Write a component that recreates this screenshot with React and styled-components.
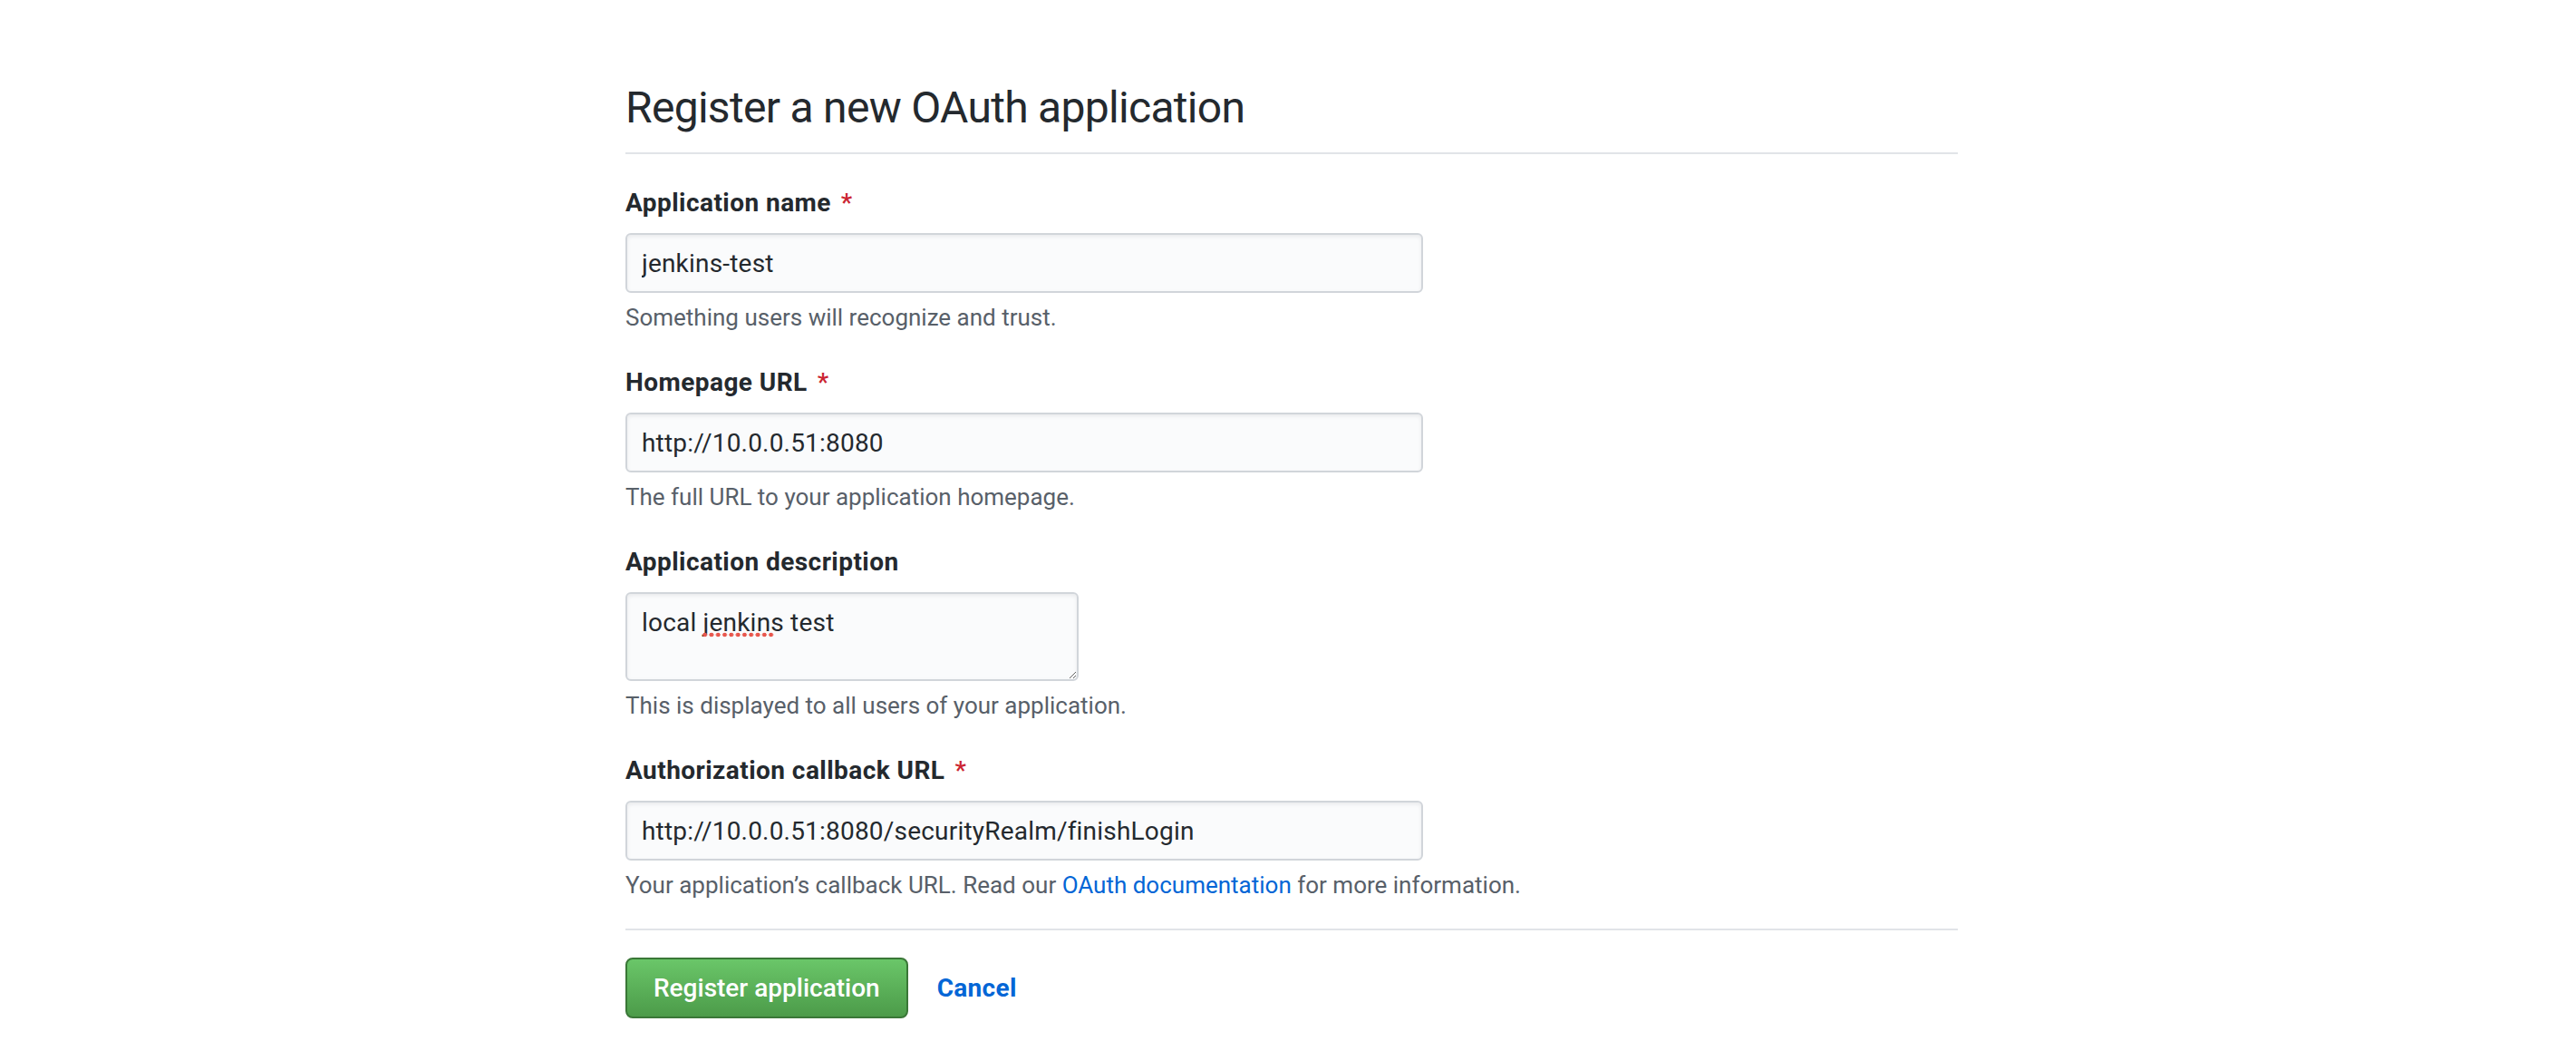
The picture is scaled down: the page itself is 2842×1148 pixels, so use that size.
import React from "react";
import styled, { createGlobalStyle } from "styled-components";

const GlobalStyle = createGlobalStyle`
  html, body {
    margin: 0;
    padding: 0;
    background: #ffffff;
  }
  body {
    font-family: Roboto, Inter, "Liberation Sans", sans-serif;
    color: #24292e;
  }
`;

const Page = styled.div`
  width: 1478px;
  margin: 0 auto;
  padding: 89px 0 0 8px;
  box-sizing: border-box;
`;

const Subhead = styled.div`
  padding-bottom: 19px;
  border-bottom: 2px solid #e1e4e8;
  margin-bottom: 34px;
`;

const Title = styled.h1`
  margin: 0;
  font-size: 48px;
  line-height: 60px;
  font-weight: 400;
  letter-spacing: -0.7px;
  color: #24292e;
`;

const FormGroup = styled.div`
  margin-bottom: 34px;
`;

const Label = styled.label`
  display: block;
  font-size: 28px;
  line-height: 40px;
  font-weight: 700;
  letter-spacing: 0.45px;
  color: #24292e;
  margin-bottom: 13px;
`;

const Required = styled.span`
  color: #cb2431;
  font-weight: 500;
  margin-left: 11px;
`;

const TextInput = styled.input`
  display: block;
  box-sizing: border-box;
  width: ${(p) => p.$width || 880}px;
  height: 66px;
  padding: 12px 16px;
  font-family: inherit;
  font-size: 28px;
  line-height: 40px;
  letter-spacing: 0.2px;
  color: #24292e;
  background: #fafbfc;
  border: 2px solid #d1d5da;
  border-radius: 6px;
  box-shadow: inset 0 2px 4px rgba(27, 31, 35, 0.075);
  outline: none;
`;

const AreaWrap = styled.div`
  position: relative;
  width: 500px;
`;

const TextArea = styled.textarea`
  display: block;
  box-sizing: border-box;
  width: 500px;
  height: 98px;
  padding: 12px 16px;
  font-family: inherit;
  font-size: 28px;
  line-height: 40px;
  letter-spacing: 0.2px;
  color: #24292e;
  background: #fafbfc;
  border: 2px solid #d1d5da;
  border-radius: 6px;
  box-shadow: inset 0 2px 4px rgba(27, 31, 35, 0.075);
  outline: none;
  resize: both;
`;

const SpellMark = styled.span`
  position: absolute;
  left: 84px;
  top: 44px;
  width: 80px;
  height: 6px;
  background-image: radial-gradient(circle, #e8574d 2.2px, transparent 2.6px);
  background-size: 7.3px 6px;
  pointer-events: none;
`;

const Note = styled.p`
  margin: 9px 0 0;
  font-size: 26px;
  line-height: 36px;
  color: #586069;
`;

const Link = styled.a`
  color: #0366d6;
  text-decoration: none;
`;

const Divider = styled.hr`
  border: 0;
  border-top: 2px solid #e1e4e8;
  margin: -4px 0 30px;
`;

const Actions = styled.div`
  display: flex;
  align-items: center;
  gap: 32px;
`;

const PrimaryButton = styled.button`
  box-sizing: border-box;
  height: 67px;
  padding: 0 29px;
  font-family: inherit;
  font-size: 28px;
  font-weight: 500;
  color: #ffffff;
  background-image: linear-gradient(180deg, #6ac669, #4c9b49);
  border: 2px solid #3a7737;
  border-radius: 8px;
  cursor: pointer;
`;

const CancelLink = styled.a`
  font-size: 28px;
  font-weight: 700;
  letter-spacing: 0.3px;
  color: #0366d6;
  text-decoration: none;
`;

const fields = [
  {
    label: "Application name",
    required: true,
    value: "jenkins-test",
    note: "Something users will recognize and trust.",
  },
  {
    label: "Homepage URL",
    required: true,
    value: "http://10.0.0.51:8080",
    note: "The full URL to your application homepage.",
  },
];

export default function App() {
  return (
    <>
      <GlobalStyle />
      <Page>
        <Subhead>
          <Title>Register a new OAuth application</Title>
        </Subhead>

        {fields.map((f) => (
          <FormGroup key={f.label}>
            <Label>
              {f.label}
              {f.required && <Required>*</Required>}
            </Label>
            <TextInput defaultValue={f.value} spellCheck={false} />
            <Note>{f.note}</Note>
          </FormGroup>
        ))}

        <FormGroup>
          <Label>Application description</Label>
          <AreaWrap>
            <TextArea defaultValue="local jenkins test" spellCheck={false} />
            <SpellMark />
          </AreaWrap>
          <Note>This is displayed to all users of your application.</Note>
        </FormGroup>

        <FormGroup>
          <Label>
            Authorization callback URL
            <Required>*</Required>
          </Label>
          <TextInput
            defaultValue="http://10.0.0.51:8080/securityRealm/finishLogin"
            spellCheck={false}
          />
          <Note>
            Your application’s callback URL. Read our{" "}
            <Link href="#">OAuth documentation</Link> for more information.
          </Note>
        </FormGroup>

        <Divider />

        <Actions>
          <PrimaryButton>Register application</PrimaryButton>
          <CancelLink href="#">Cancel</CancelLink>
        </Actions>
      </Page>
    </>
  );
}
